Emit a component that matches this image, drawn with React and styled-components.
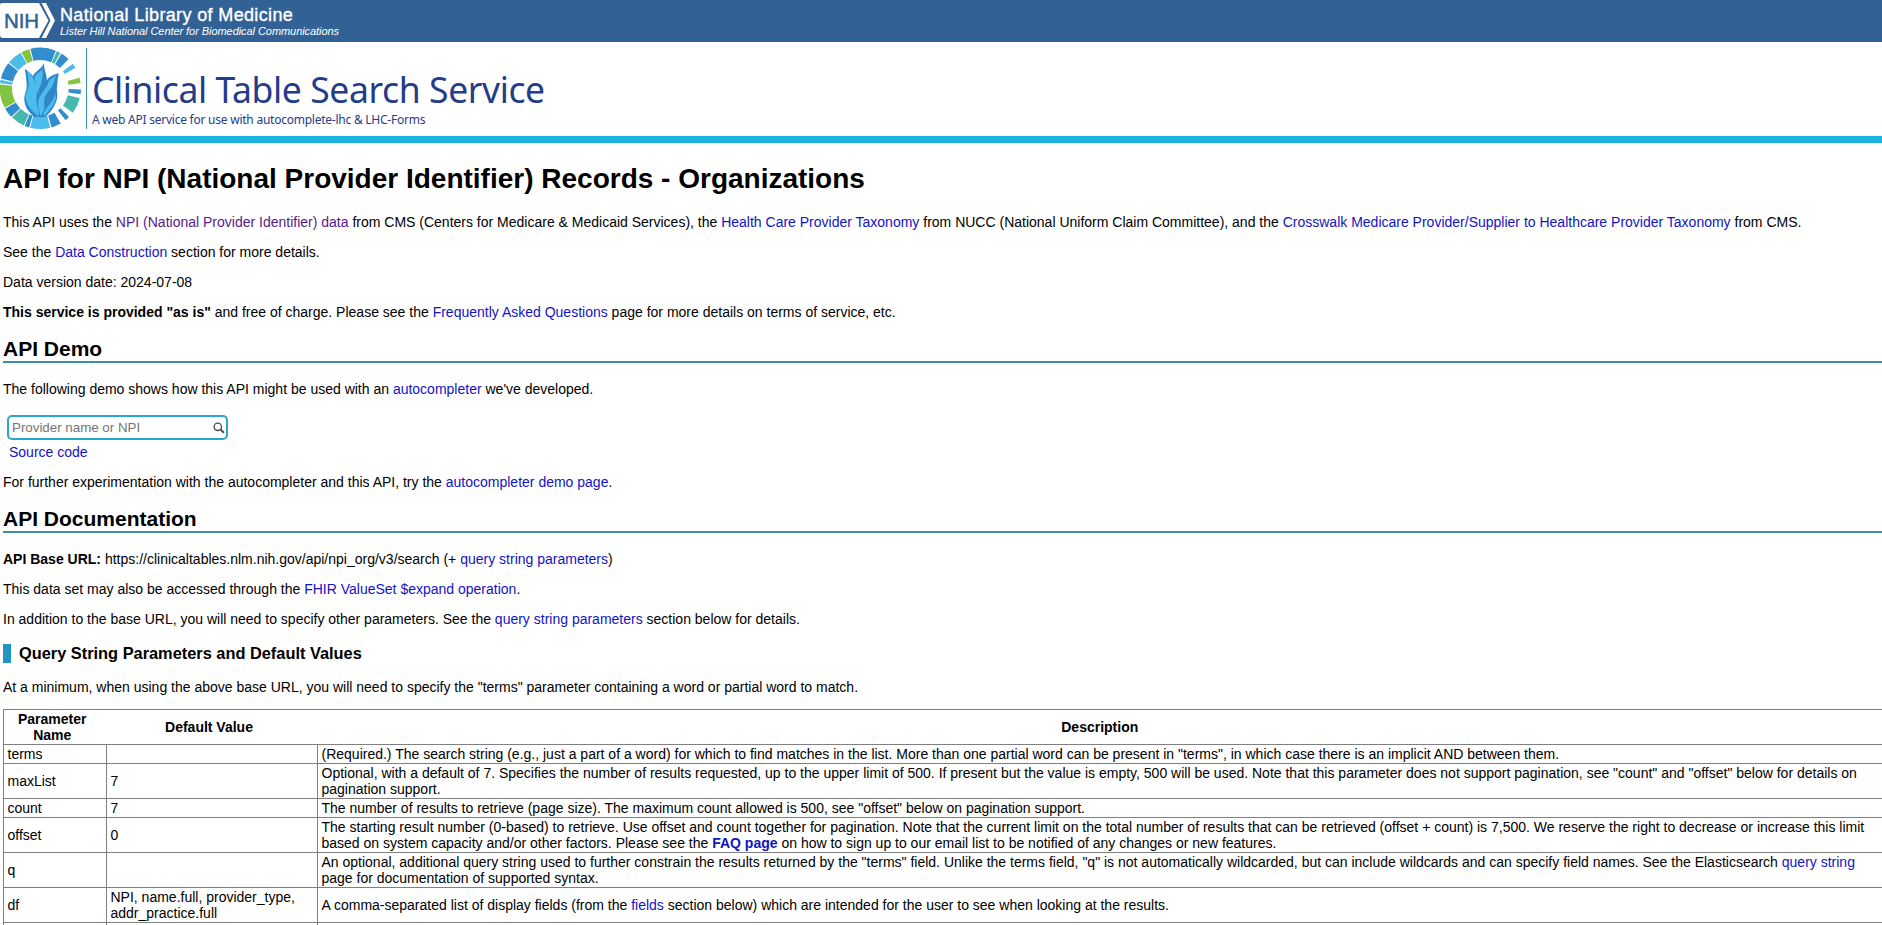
import React from "react";
import styled, { createGlobalStyle } from "styled-components";

const GlobalStyle = createGlobalStyle`
  html, body { margin: 0; padding: 0; background: #fff; }
  body {
    height: 925px;
    overflow: hidden;
    color: #000;
    font: 14px/16px "Liberation Sans", Arial, sans-serif;
  }
`;

const TopBar = styled.header`
  height: 42px;
  display: flex;
  background: #326295;
  color: #fff;
`;

const NihMark = styled.svg`
  display: block;
  width: 56px;
  height: 42px;
  margin-right: 4px;
  flex: none;
`;

const TopTitles = styled.div`
  display: flex;
  flex-direction: column;
  white-space: nowrap;
`;

const LibraryName = styled.div`
  padding-top: 5px;
  font-size: 18px;
  line-height: 20px;
  letter-spacing: 0.36px;
  -webkit-text-stroke: 0.35px #fff;
`;

const CenterName = styled.div`
  font-size: 11px;
  line-height: 12px;
  letter-spacing: -0.06px;
  font-style: italic;
`;

const Banner = styled.div`
  height: 94px;
  display: flex;
  border-bottom: 7px solid #1cb3e0;
`;

const Emblem = styled.svg`
  display: block;
  width: 84px;
  height: 84px;
  margin: 5px 2px 0 0;
  flex: none;
`;

const BannerText = styled.div`
  height: 81px;
  margin-top: 6px;
  padding-left: 5px;
  border-left: 1px solid #3b94ad;
  color: #243d8a;
  font-family: "Noto Sans", sans-serif;
  white-space: nowrap;
`;

const ServiceName = styled.div`
  padding-top: 18px;
  font-size: 35.5px;
  line-height: 47px;
  letter-spacing: -0.4px;
`;

const Tagline = styled.div`
  font-size: 12px;
  line-height: 14px;
  letter-spacing: -0.24px;
`;

const Content = styled.main`
  width: 1880px;
  margin-left: 3px;
  display: flow-root;
`;

const PageTitle = styled.h1`
  margin: 19px 0;
  font-size: 28px;
  line-height: 33px;
`;

const SectionTitle = styled.h2`
  margin: 17px 0 18px;
  font-size: 21px;
  line-height: 24px;
  border-bottom: 2px solid #3a8fa9;
`;

const SubTitle = styled.h3`
  margin: 17px 0 16px;
  padding-left: 8px;
  border-left: 8px solid #2196c4;
  font-size: 16.38px;
  line-height: 19px;
`;

const Para = styled.p`
  margin: 14px 0;
`;

const Link = styled.a`
  color: ${(p) => (p.$visited ? "#551a8b" : "#1313c4")};
  font-weight: ${(p) => (p.$strong ? "bold" : "inherit")};
  text-decoration: none;
`;

const Demo = styled.div`
  margin: 18px 0 14px 4px;
`;

const SearchBox = styled.div`
  box-sizing: border-box;
  width: 221px;
  height: 25px;
  display: flex;
  align-items: center;
  justify-content: space-between;
  padding: 0 1px 0 3px;
  border: 2px solid #2ba6cb;
  border-radius: 5px;
`;

const SearchInput = styled.input`
  width: 180px;
  padding: 0;
  border: 0;
  outline: 0;
  background: none;
  font: 13.33px/16px "Liberation Sans", Arial, sans-serif;
  &::placeholder { color: #757575; opacity: 1; }
`;

const SourceRow = styled.div`
  padding: 4px 0 0 2px;
`;

const ParamTable = styled.table`
  width: 1880px;
  table-layout: fixed;
  border-collapse: collapse;
  border: 1px solid #808080;
`;

const HeadCell = styled.th`
  box-sizing: border-box;
  padding: 1px ${(p) => (p.$w ? "9px" : "3px")} 1px 3px;
  width: ${(p) => p.$w};
`;

const Cell = styled.td`
  padding: 1px 3px 1px 3.5px;
  border: 1px solid #808080;
  vertical-align: middle;
`;

const SEGMENTS = [
  [-14, 22.4, "#318dcd"], [23.8, 29.5, "#45b9b0"], [31.3, 44, "#318dcd"],
  [53, 59.5, "#4bbcec"], [75, 82.5, "#82c341"], [91.5, 98.5, "#318dcd"],
  [104, 127, "#45b9b0"], [135, 141.5, "#318dcd"], [150, 164, "#318dcd"],
  [166, 194.5, "#4bbcec"], [196, 202.5, "#318dcd"], [204, 224, "#45b9b0"],
  [225.5, 240, "#318dcd"], [241.5, 275.5, "#82c341"], [277, 282, "#4bbcec"],
  [284, 308, "#318dcd"], [309.5, 331, "#4bbcec"], [332.5, 344.5, "#82c341"],
];

function arc(from, to) {
  const point = (deg, r) => {
    const a = (deg * Math.PI) / 180;
    return `${(121 + r * Math.sin(a)).toFixed(1)} ${(124 - r * Math.cos(a)).toFixed(1)}`;
  };
  return `M${point(from, 122)}A122 122 0 0 1 ${point(to, 122)}L${point(to, 85)}A85 85 0 0 0 ${point(from, 85)}Z`;
}

function FlameEmblem() {
  return (
    <Emblem viewBox="0 0 252 252" aria-hidden="true">
      {SEGMENTS.map(([from, to, fill]) => (
        <path key={from} d={arc(from, to)} fill={fill} />
      ))}
      <path fill="#2f86c8" d="M103 210C88 197 73 181 73 156C73 141 82 128 80 111C79 94 77 78 74 65C85 74 93 78 99 88C103 74 124 67 132 49C132 70 139 77 141 100C148 87 162 82 177 79C171 95 174 109 170 127C175 149 170 165 161 180C153 194 145 201 137 210Z" />
      <path fill="#4bbcec" d="M81 72C91 79 101 91 105 106C115 126 109 141 109 160C109 178 119 190 116 208C101 196 79 179 77 151C76 139 87 126 86 108C85 94 84 84 81 72ZM128 64C127 80 130 90 124 107C121 119 114 127 114 142C108 124 108 107 103 91C110 79 121 77 128 64ZM169 85C162 98 164 111 151 125C138 142 130 153 133 176C134 191 126 199 122 208C115 187 110 166 120 148C132 128 143 119 146 103C153 94 161 90 169 85ZM166 138C173 164 155 180 136 205C130 209 128 201 134 192C145 175 161 164 166 138Z" />
    </Emblem>
  );
}

const PARAMS = [
  ["terms", "", <>(Required.) The search string (e.g., just a part of a word) for which to find matches in the list. More than one partial word can be present in "terms", in which case there is an implicit AND between them.</>],
  ["maxList", "7", <>Optional, with a default of 7. Specifies the number of results requested, up to the upper limit of 500. If present but the value is empty, 500 will be used. Note that this parameter does not support pagination, see "count" and "offset" below for details on pagination support.</>],
  ["count", "7", <>The number of results to retrieve (page size). The maximum count allowed is 500, see "offset" below on pagination support.</>],
  ["offset", "0", <>The starting result number (0-based) to retrieve. Use offset and count together for pagination. Note that the current limit on the total number of results that can be retrieved (offset + count) is 7,500. We reserve the right to decrease or increase this limit based on system capacity and/or other factors. Please see the <Link $strong>FAQ page</Link> on how to sign up to our email list to be notified of any changes or new features.</>],
  ["q", "", <>An optional, additional query string used to further constrain the results returned by the "terms" field. Unlike the terms field, "q" is not automatically wildcarded, but can include wildcards and can specify field names. See the Elasticsearch <Link>query string</Link> page for documentation of supported syntax.</>],
  ["df", "NPI, name.full, provider_type, addr_practice.full", <>A comma-separated list of display fields (from the <Link>fields</Link> section below) which are intended for the user to see when looking at the results.</>],
  ["", "", <>&nbsp;</>],
];

export default function App() {
  return (
    <>
      <GlobalStyle />
      <TopBar>
        <NihMark viewBox="0 0 56 42" aria-hidden="true">
          <path fill="#fff" d="M2 3H39L48.500 20.500L39 38H3Q0 38 0 35V5Q0 3 2 3Z" />
          <path fill="#fff" d="M41.500 3H46L55 20.500L46 38H41.500L50.500 20.500Z" />
          <text x="4" y="28" fill="#326295" stroke="#326295" strokeWidth="0.5" fontFamily="Liberation Sans, Arial, sans-serif" fontSize="20.500" textLength="35">NIH</text>
        </NihMark>
        <TopTitles>
          <LibraryName>National Library of Medicine</LibraryName>
          <CenterName>Lister Hill National Center for Biomedical Communications</CenterName>
        </TopTitles>
      </TopBar>
      <Banner>
        <FlameEmblem />
        <BannerText>
          <ServiceName>Clinical Table Search Service</ServiceName>
          <Tagline>A web API service for use with autocomplete-lhc &amp; LHC-Forms</Tagline>
        </BannerText>
      </Banner>
      <Content>
        <PageTitle>API for NPI (National Provider Identifier) Records - Organizations</PageTitle>
        <Para>This API uses the <Link $visited>NPI (National Provider Identifier) data</Link> from CMS (Centers for Medicare &amp; Medicaid Services), the <Link>Health Care Provider Taxonomy</Link> from NUCC (National Uniform Claim Committee), and the <Link>Crosswalk Medicare Provider/Supplier to Healthcare Provider Taxonomy</Link> from CMS.</Para>
        <Para>See the <Link>Data Construction</Link> section for more details.</Para>
        <Para>Data version date: 2024-07-08</Para>
        <Para><b>This service is provided "as is"</b> and free of charge. Please see the <Link>Frequently Asked Questions</Link> page for more details on terms of service, etc.</Para>
        <SectionTitle>API Demo</SectionTitle>
        <Para>The following demo shows how this API might be used with an <Link>autocompleter</Link> we've developed.</Para>
        <Demo>
          <SearchBox>
            <SearchInput placeholder="Provider name or NPI" />
            <svg width="12" height="12" viewBox="0 0 12 12" fill="none" stroke="#4d4d4d">
              <circle cx="4.800" cy="4.800" r="3.700" strokeWidth="1.300" />
              <path d="M7.500 7.500L11 10.800" strokeWidth="2" />
            </svg>
          </SearchBox>
          <SourceRow><Link>Source code</Link></SourceRow>
        </Demo>
        <Para>For further experimentation with the autocompleter and this API, try the <Link>autocompleter demo page</Link>.</Para>
        <SectionTitle>API Documentation</SectionTitle>
        <Para><b>API Base URL:</b> https://clinicaltables.nlm.nih.gov/api/npi_org/v3/search (+ <Link>query string parameters</Link>)</Para>
        <Para>This data set may also be accessed through the <Link>FHIR ValueSet $expand operation</Link>.</Para>
        <Para>In addition to the base URL, you will need to specify other parameters. See the <Link>query string parameters</Link> section below for details.</Para>
        <SubTitle>Query String Parameters and Default Values</SubTitle>
        <Para>At a minimum, when using the above base URL, you will need to specify the "terms" parameter containing a word or partial word to match.</Para>
        <ParamTable>
          <thead>
            <tr>
              <HeadCell $w="103px">Parameter Name</HeadCell>
              <HeadCell $w="211px">Default Value</HeadCell>
              <HeadCell>Description</HeadCell>
            </tr>
          </thead>
          <tbody>
            {PARAMS.map(([name, value, description]) => (
              <tr key={name}>
                <Cell>{name}</Cell>
                <Cell>{value}</Cell>
                <Cell>{description}</Cell>
              </tr>
            ))}
          </tbody>
        </ParamTable>
      </Content>
    </>
  );
}
